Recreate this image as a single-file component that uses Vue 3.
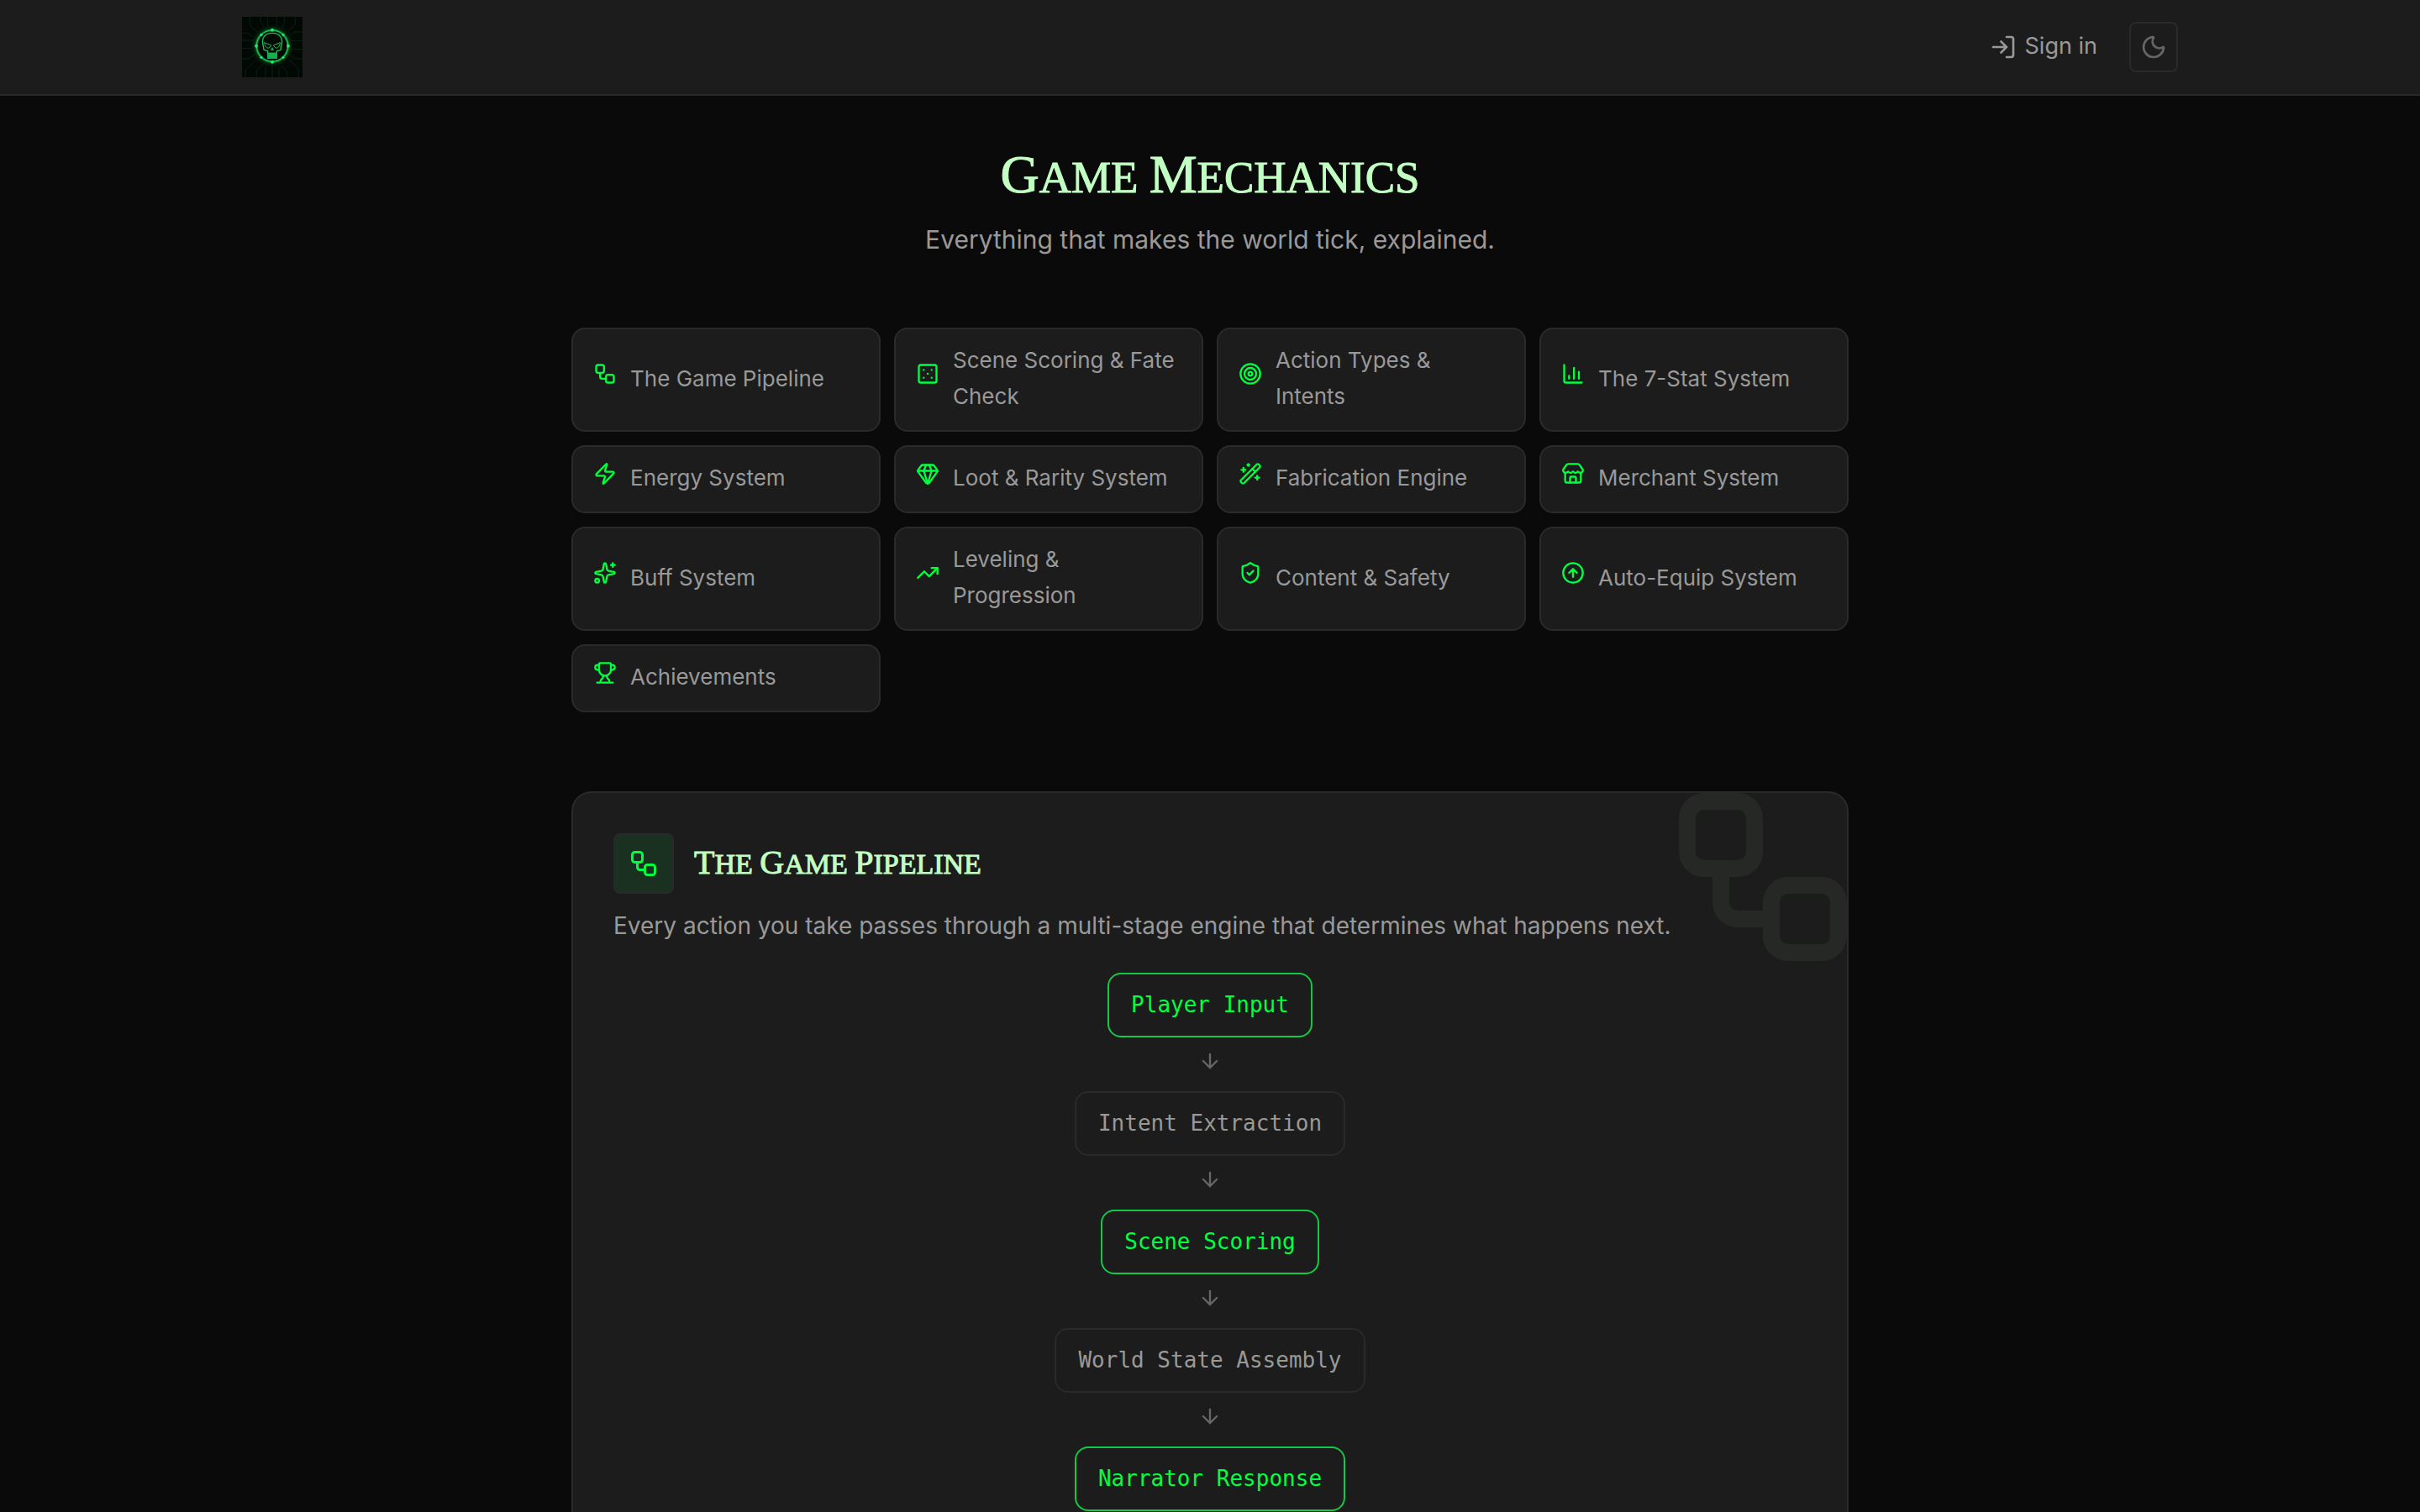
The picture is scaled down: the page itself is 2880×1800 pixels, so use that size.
<script setup>
import { h } from 'vue'

const icons = {
  workflow: [
    ['rect', { x: 3, y: 3, width: 8, height: 8, rx: 2 }],
    ['path', { d: 'M7 11v4a2 2 0 0 0 2 2h4' }],
    ['rect', { x: 13, y: 13, width: 8, height: 8, rx: 2 }],
  ],
  dice: [
    ['rect', { x: 3, y: 3, width: 18, height: 18, rx: 2 }],
    ['path', { d: 'M16 8h.01M8 8h.01M8 16h.01M16 16h.01M12 12h.01' }],
  ],
  target: [
    ['circle', { cx: 12, cy: 12, r: 10 }],
    ['circle', { cx: 12, cy: 12, r: 6 }],
    ['circle', { cx: 12, cy: 12, r: 2 }],
  ],
  chart: [['path', { d: 'M3 3v16a2 2 0 0 0 2 2h16M13 17V6M18 17V10M8 17v-3' }]],
  zap: [
    ['path', { d: 'M4 14a1 1 0 0 1-.78-1.63l9.9-10.2a.5.5 0 0 1 .86.46l-1.92 6.02A1 1 0 0 0 13 10h7a1 1 0 0 1 .78 1.63l-9.9 10.2a.5.5 0 0 1-.86-.46l1.92-6.02A1 1 0 0 0 11 14z' }],
  ],
  gem: [
    ['path', { d: 'M10.5 3 8 9l4 13 4-13-2.5-6' }],
    ['path', { d: 'M17 3a2 2 0 0 1 1.6.8l3 4a2 2 0 0 1 .013 2.382l-7.99 10.986a2 2 0 0 1-3.247 0l-7.99-10.986A2 2 0 0 1 2.4 7.8l2.998-3.997A2 2 0 0 1 7 3z' }],
    ['path', { d: 'M2 9h20' }],
  ],
  wand: [
    ['path', { d: 'm21.64 3.64-1.28-1.28a1.21 1.21 0 0 0-1.72 0L2.36 18.64a1.21 1.21 0 0 0 0 1.72l1.28 1.28a1.2 1.2 0 0 0 1.72 0L21.64 5.36a1.2 1.2 0 0 0 0-1.72' }],
    ['path', { d: 'm14 7 3 3M5 6v4M19 14v4M10 2v2M7 8H3M21 16h-4M11 3H9' }],
  ],
  store: [
    ['path', { d: 'M15 21v-5a1 1 0 0 0-1-1h-4a1 1 0 0 0-1 1v5' }],
    ['path', { d: 'M17.774 10.31a1.12 1.12 0 0 0-1.549 0 2.5 2.5 0 0 1-3.451 0 1.12 1.12 0 0 0-1.548 0 2.5 2.5 0 0 1-3.452 0 1.12 1.12 0 0 0-1.549 0 2.5 2.5 0 0 1-3.77-3.248l2.889-4.184A2 2 0 0 1 7 2h10a2 2 0 0 1 1.653.873l2.895 4.192a2.5 2.5 0 0 1-3.774 3.244' }],
    ['path', { d: 'M4 10.95V19a2 2 0 0 0 2 2h12a2 2 0 0 0 2-2v-8.05' }],
  ],
  sparkles: [
    ['path', { d: 'M11.017 2.814a1 1 0 0 1 1.966 0l1.051 5.558a2 2 0 0 0 1.594 1.594l5.558 1.051a1 1 0 0 1 0 1.966l-5.558 1.051a2 2 0 0 0-1.594 1.594l-1.051 5.558a1 1 0 0 1-1.966 0l-1.051-5.558a2 2 0 0 0-1.594-1.594l-5.558-1.051a1 1 0 0 1 0-1.966l5.558-1.051a2 2 0 0 0 1.594-1.594z' }],
    ['path', { d: 'M20 2v4M22 4h-4' }],
    ['circle', { cx: 4, cy: 20, r: 2 }],
  ],
  trending: [['path', { d: 'M16 7h6v6' }], ['path', { d: 'm22 7-8.5 8.5-5-5L2 17' }]],
  shield: [
    ['path', { d: 'M20 13c0 5-3.5 7.5-7.66 8.95a1 1 0 0 1-.67-.01C7.5 20.5 4 18 4 13V6a1 1 0 0 1 1-1c2 0 4.5-1.2 6.24-2.72a1.17 1.17 0 0 1 1.52 0C14.51 3.81 17 5 19 5a1 1 0 0 1 1 1z' }],
    ['path', { d: 'm9 12 2 2 4-4' }],
  ],
  arrowUp: [
    ['circle', { cx: 12, cy: 12, r: 10 }],
    ['path', { d: 'm16 12-4-4-4 4M12 16V8' }],
  ],
  trophy: [
    ['path', { d: 'M10 14.66v1.626a2 2 0 0 1-.976 1.696A5 5 0 0 0 7 21.978M14 14.66v1.626a2 2 0 0 0 .976 1.696A5 5 0 0 1 17 21.978M18 9h1.5a1 1 0 0 0 0-5H18M4 22h16' }],
    ['path', { d: 'M6 9a6 6 0 0 0 12 0V3a1 1 0 0 0-1-1H7a1 1 0 0 0-1 1z' }],
    ['path', { d: 'M6 9H4.5a1 1 0 0 1 0-5H6' }],
  ],
  login: [
    ['path', { d: 'm10 17 5-5-5-5M15 12H3M15 3h4a2 2 0 0 1 2 2v14a2 2 0 0 1-2 2h-4' }],
  ],
  moon: [
    ['path', { d: 'M20.985 12.486a9 9 0 1 1-9.473-9.472c.405-.022.617.46.402.803a6 6 0 0 0 8.268 8.268c.344-.215.825-.004.803.401' }],
  ],
  arrowDown: [['path', { d: 'M12 5v14M19 12l-7 7-7-7' }]],
}

const Icon = (props) =>
  h(
    'svg',
    {
      viewBox: '0 0 24 24',
      fill: 'none',
      stroke: 'currentColor',
      'stroke-width': 2,
      'stroke-linecap': 'round',
      'stroke-linejoin': 'round',
      'aria-hidden': 'true',
    },
    icons[props.name].map(([tag, attrs]) => h(tag, attrs)),
  )
Icon.props = ['name']

const sections = [
  { id: 'pipeline', icon: 'workflow', label: 'The Game Pipeline' },
  { id: 'scoring', icon: 'dice', label: 'Scene Scoring & Fate Check' },
  { id: 'actions', icon: 'target', label: 'Action Types & Intents' },
  { id: 'stats', icon: 'chart', label: 'The 7-Stat System' },
  { id: 'energy', icon: 'zap', label: 'Energy System' },
  { id: 'loot', icon: 'gem', label: 'Loot & Rarity System' },
  { id: 'fabrication', icon: 'wand', label: 'Fabrication Engine' },
  { id: 'merchant', icon: 'store', label: 'Merchant System' },
  { id: 'buffs', icon: 'sparkles', label: 'Buff System' },
  { id: 'leveling', icon: 'trending', label: 'Leveling & Progression' },
  { id: 'safety', icon: 'shield', label: 'Content & Safety' },
  { id: 'equip', icon: 'arrowUp', label: 'Auto-Equip System' },
  { id: 'achievements', icon: 'trophy', label: 'Achievements' },
]

const steps = [
  { label: 'Player Input', active: true },
  { label: 'Intent Extraction', active: false },
  { label: 'Scene Scoring', active: true },
  { label: 'World State Assembly', active: false },
  { label: 'Narrator Response', active: true },
]
</script>

<template>
  <div class="page">
    <header class="topbar">
      <div class="topbar-inner">
        <a class="logo" href="#" aria-label="Home">
          <svg viewBox="0 0 216 216" fill="none" aria-hidden="true">
            <defs>
              <radialGradient id="halo">
                <stop offset="0.5" stop-color="#052d10" />
                <stop offset="0.7" stop-color="#064a1c" />
                <stop offset="1" stop-color="#020a04" stop-opacity="0" />
              </radialGradient>
            </defs>
            <rect width="216" height="216" fill="#020804" />
            <g stroke="#052412" stroke-width="3">
              <path d="M0 58h22l16 14M0 84h46M0 112h38M0 150h24l26-20M12 216v-26l36-34M52 216v-24l22-22M84 216v-36M108 216v-50M132 216v-34M160 216v-20l-18-20M202 216v-30l-34-32M216 150h-26l-24-18M216 116h-40M216 86h-36l-8-6M216 54h-30l-14 14M190 0v28l-26 24M152 0v22l-10 16M124 0v36M92 0v36M66 0v20l14 18M28 0v30l28 26" />
            </g>
            <circle cx="108" cy="104" r="80" fill="url(#halo)" />
            <circle cx="108" cy="104" r="56" fill="#020a04" stroke="#0a7a32" stroke-width="8" />
            <circle cx="108" cy="104" r="56" stroke="#1cd860" stroke-width="3" />
            <g fill="#1fe868">
              <circle cx="108" cy="47" r="6" /><circle cx="108" cy="161" r="6" />
              <circle cx="51" cy="104" r="6" /><circle cx="165" cy="104" r="6" />
              <circle cx="69" cy="64" r="5" /><circle cx="147" cy="64" r="5" />
              <circle cx="69" cy="145" r="5" /><circle cx="147" cy="145" r="5" />
            </g>
            <g stroke="#18c455" stroke-width="4" stroke-linejoin="round">
              <path d="M92 148v-26l-14-4-2-14c-8-24 2-46 32-46s40 22 32 46l-2 14-14 4v26z" />
              <path d="M80 92l24 10-7 9c-9 2-16-5-17-19zM136 92l-24 10 7 9c9 2 16-5 17-19zM108 110l-4 9h8z" stroke-width="3" />
            </g>
            <path d="M92 128h32v20H92z" fill="#0b7a33" />
            <path d="M96 128v19M102 128v19M108 128v19M114 128v19M120 128v19" stroke="#1fe868" stroke-width="3" />
          </svg>
        </a>
        <div class="actions">
          <a class="signin" href="#"><Icon name="login" class="icon-lg" /><span>Sign in</span></a>
          <button class="theme" type="button" aria-label="Toggle theme"><Icon name="moon" class="icon-lg" /></button>
        </div>
      </div>
    </header>

    <main class="content">
      <div class="hero">
        <h1 class="display title"><span>Game</span> <span>Mechanics</span></h1>
        <p class="subtitle">Everything that makes the world tick, explained.</p>
      </div>

      <nav class="toc" aria-label="Sections">
        <a v-for="s in sections" :key="s.id" :href="'#' + s.id" class="toc-card">
          <span class="toc-icon"><Icon :name="s.icon" class="icon-md" /></span>
          <span>{{ s.label }}</span>
        </a>
      </nav>

      <section id="pipeline" class="panel">
        <Icon name="workflow" class="watermark" />
        <div class="panel-head">
          <span class="badge"><Icon name="workflow" class="icon-xl" /></span>
          <h2 class="display heading"><span>The</span> <span>Game</span> <span>Pipeline</span></h2>
        </div>
        <p class="lead">Every action you take passes through a multi-stage engine that determines what happens next.</p>
        <div class="flow">
          <template v-for="(step, i) in steps" :key="step.label">
            <Icon v-if="i" name="arrowDown" class="icon-md arrow" />
            <div class="step" :class="{ active: step.active }">{{ step.label }}</div>
          </template>
        </div>
      </section>
    </main>
  </div>
</template>

<style>
body {
  background: #0a0a0a;
}
</style>

<style scoped>
.page {
  min-height: 100vh;
  background: #0a0a0a;
  color: #999;
  font-family: Inter, "Liberation Sans", sans-serif;
}
.page * {
  box-sizing: border-box;
}
a {
  color: inherit;
  text-decoration: none;
}
svg {
  display: block;
  flex: none;
}
.icon-md {
  width: 28px;
  height: 28px;
}
.icon-lg {
  width: 32px;
  height: 32px;
}
.icon-xl {
  width: 36px;
  height: 36px;
}
.topbar {
  background: #1c1c1c;
  border-bottom: 2px solid #2a2a2a;
}
.topbar-inner {
  max-width: 2304px;
  margin: 0 auto;
  padding: 20px 0;
  display: flex;
  align-items: center;
  justify-content: space-between;
}
.logo svg {
  width: 72px;
  height: 72px;
}
.actions {
  display: flex;
  align-items: center;
  gap: 38px;
}
.signin {
  display: flex;
  align-items: center;
  gap: 10px;
  font-size: 27px;
}
.signin span {
  padding-bottom: 4px;
}
.theme {
  width: 58px;
  height: 60px;
  padding: 0;
  display: flex;
  align-items: center;
  justify-content: center;
  background: none;
  border: 2px solid #2a2a2a;
  border-radius: 8px;
  color: #666;
}
.content {
  max-width: 1520px;
  margin: 0 auto;
  padding: 64px 0 96px;
}
.hero {
  text-align: center;
}
.display {
  margin: 0;
  font-family: "Liberation Serif", serif;
  font-weight: 400;
  text-transform: uppercase;
  color: #c2ffc2;
  -webkit-text-stroke: 1px #c2ffc2;
}
.display span {
  display: inline-block;
}
.title {
  font-size: 53px;
  line-height: 60px;
}
.title span::first-letter {
  font-size: 64px;
}
.subtitle {
  margin: 20px 0 0;
  font-size: 30px;
  line-height: 48px;
}
.toc {
  margin-top: 81px;
  display: grid;
  grid-template-columns: repeat(4, 1fr);
  gap: 16px;
}
.toc-card {
  display: flex;
  align-items: center;
  gap: 16px;
  padding: 15px 24px 19px;
  background: #1c1c1c;
  border: 2px solid #2a2a2a;
  border-radius: 16px;
  font-size: 26px;
  line-height: 43px;
}
.toc-icon {
  padding-bottom: 10px;
  color: #00ff41;
}
.panel {
  position: relative;
  overflow: hidden;
  margin-top: 94px;
  padding: 48px;
  background: #1c1c1c;
  border: 2px solid #2a2a2a;
  border-radius: 24px;
}
.watermark {
  position: absolute;
  top: -20px;
  right: -20px;
  width: 240px;
  height: 240px;
  color: #252825;
}
.panel-head {
  display: flex;
  align-items: center;
  gap: 24px;
}
.badge {
  width: 72px;
  height: 72px;
  display: flex;
  align-items: center;
  justify-content: center;
  background: #1a3020;
  border: 2px solid #2a2a2a;
  border-radius: 8px;
  color: #00ff41;
}
.heading {
  font-size: 34px;
  line-height: 48px;
}
.heading span::first-letter {
  font-size: 40px;
}
.lead {
  position: relative;
  margin: 14px 0 32px;
  font-size: 28px;
  line-height: 48px;
}
.flow {
  display: flex;
  flex-direction: column;
  align-items: center;
}
.step {
  padding: 16px 26px;
  border: 2px solid #2a2a2a;
  border-radius: 16px;
  font-family: "DejaVu Sans Mono", monospace;
  font-size: 26px;
  line-height: 41px;
}
.step.active {
  border-color: #13c945;
  color: #00ff41;
}
.arrow {
  margin: 14px 0 22px;
  color: #666;
}
</style>
